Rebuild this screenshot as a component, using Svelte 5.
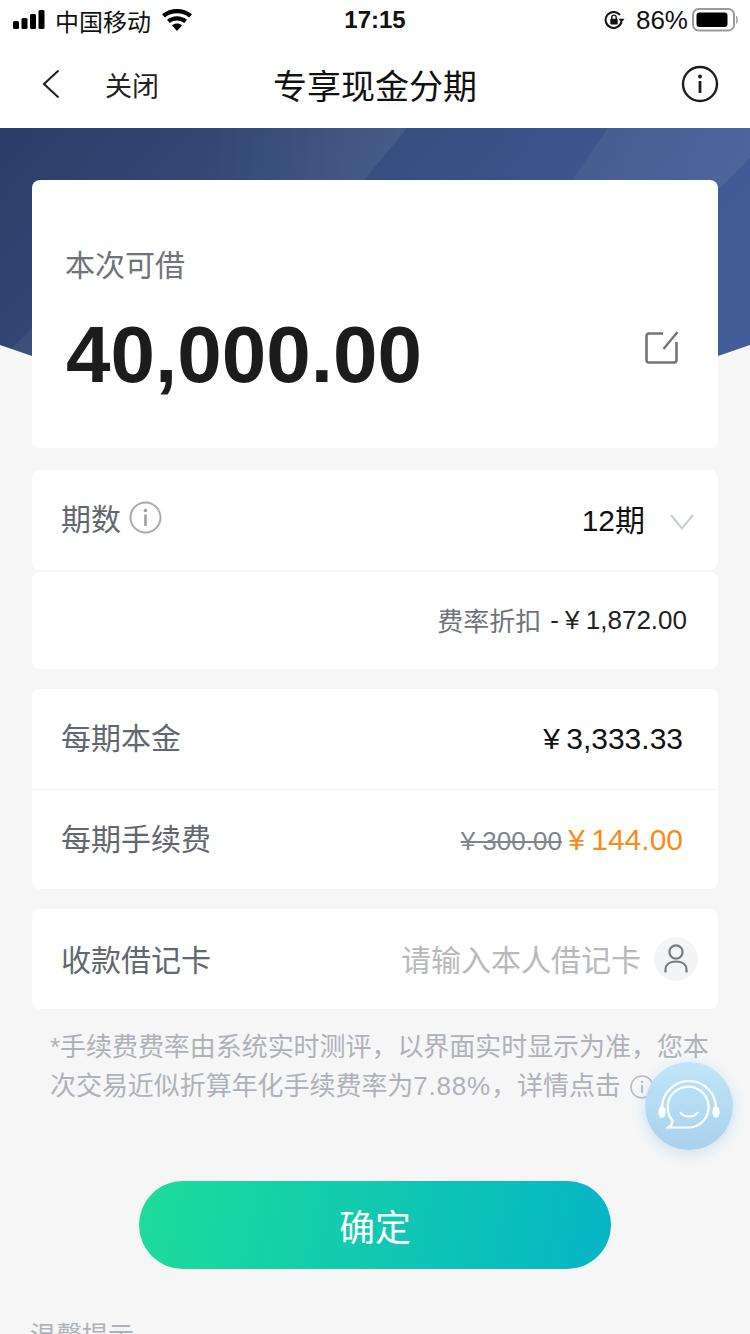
<script lang="ts">
  const noteFirst = '*手续费费率由系统实时测评，以界面实时显示为准，您本';
</script>

<div class="page">
  <!-- hero backdrop, sits behind the first card -->
  <svg class="hero" width="750" height="300" viewBox="0 128 750 300" aria-hidden="true">
    <defs>
      <linearGradient id="heroBase" x1="0" y1="0" x2="1" y2="0.35">
        <stop offset="0" stop-color="#2b3e68" />
        <stop offset="0.55" stop-color="#395084" />
        <stop offset="1" stop-color="#425c98" />
      </linearGradient>
      <linearGradient id="bandA" x1="0" y1="0" x2="1" y2="0">
        <stop offset="0" stop-color="#fff" stop-opacity="0" />
        <stop offset="1" stop-color="#fff" stop-opacity="0.08" />
      </linearGradient>
      <linearGradient id="bandB" x1="0" y1="0" x2="1" y2="0">
        <stop offset="0" stop-color="#fff" stop-opacity="0.05" />
        <stop offset="1" stop-color="#fff" stop-opacity="0.07" />
      </linearGradient>
      <clipPath id="heroClip">
        <path d="M0 128H750V345Q375 480 0 345Z" />
      </clipPath>
    </defs>
    <g clip-path="url(#heroClip)">
      <rect x="0" y="128" width="750" height="300" fill="url(#heroBase)" />
      <path d="M200 128H407L364 180H200Z" fill="url(#bandA)" />
      <path d="M608 128H750V158L718 190H565Z" fill="url(#bandB)" />
      <path d="M0 360L60 300V400H0Z" fill="#fff" fill-opacity="0.05" />
    </g>
  </svg>

  <header class="status">
    <div class="status-left">
      <svg width="33" height="22" viewBox="0 0 33 22" aria-hidden="true">
        <rect x="0" y="12" width="6" height="8" rx="1.5" />
        <rect x="8.5" y="9" width="6" height="11" rx="1.5" />
        <rect x="17" y="5" width="6" height="15" rx="1.5" />
        <rect x="25.5" y="1" width="6" height="19" rx="1.5" />
      </svg>
      <span>中国移动</span>
      <svg class="wifi" width="30" height="22" viewBox="0 0 30 22" aria-hidden="true">
        <path d="M15 22L10 16.4C13 14 17 14 20 16.4Z" />
        <path d="M7.8 13.9L5 10.8C10.8 6.1 19.2 6.1 25 10.8L22.2 13.9C18 10.6 12 10.6 7.8 13.9Z" />
        <path d="M2.9 8.4L0 5.2C8.6-1.7 21.4-1.7 30 5.2L27.1 8.4C20 2.8 10 2.8 2.9 8.4Z" />
      </svg>
    </div>
    <div class="status-time">17:15</div>
    <div class="status-right">
      <svg width="21" height="20" viewBox="0 0 21 20" aria-hidden="true">
        <path d="M17.5 11.5A8 8 0 1 1 16 5" fill="none" stroke="#111" stroke-width="2" />
        <path d="M14.5 8.8H20.5L17.5 12.4Z" fill="#111" />
        <rect x="6.3" y="8.8" width="7.4" height="5.6" rx="1" fill="#111" />
        <path d="M7.8 9V7.3A2.2 2.2 0 0 1 12.2 7.3V9" fill="none" stroke="#111" stroke-width="1.4" />
      </svg>
      <span class="pct">86%</span>
      <svg width="46" height="24" viewBox="0 0 46 24" aria-hidden="true">
        <rect x="1" y="1" width="41" height="21.5" rx="5.5" fill="none" stroke="#9a9a9a" stroke-width="2" />
        <rect x="4.5" y="4.5" width="31" height="14.5" rx="3" fill="#000" />
        <path d="M44 8.5C45.5 9 45.5 14.5 44 15" fill="none" stroke="#9a9a9a" stroke-width="1.5" />
      </svg>
    </div>
  </header>

  <nav class="nav">
    <div class="nav-left">
      <svg width="18" height="30" viewBox="0 0 18 30" aria-hidden="true">
        <path d="M16.5 1.5L2 15L16.5 28.5" fill="none" stroke="#1d1d1d" stroke-width="2" />
      </svg>
      <span class="close">关闭</span>
    </div>
    <h1>专享现金分期</h1>
    <svg class="nav-info" width="38" height="38" viewBox="0 0 38 38" aria-hidden="true">
      <circle cx="19" cy="19" r="17" fill="none" stroke="#1d1d1d" stroke-width="2.4" />
      <circle cx="19" cy="11.5" r="2" fill="#1d1d1d" />
      <rect x="17.6" y="16" width="2.8" height="12" fill="#1d1d1d" />
    </svg>
  </nav>

  <main class="content">
    <section class="card amount-card">
      <div class="amount-label">本次可借</div>
      <div class="amount-row">
        <span class="amount">40,000.00</span>
        <svg class="edit" width="34" height="33" viewBox="0 0 34 33" aria-hidden="true">
          <path d="M18 2.5H4A2.5 2.5 0 0 0 1.5 5V29A2.5 2.5 0 0 0 4 31.5H29A2.5 2.5 0 0 0 31.5 29V11" fill="none" stroke="#70757c" stroke-width="2.6" />
          <path d="M32.5 1L18.5 18" fill="none" stroke="#70757c" stroke-width="2.4" />
        </svg>
      </div>
    </section>

    <section class="group">
      <div class="card row term-row">
        <div class="label">
          期数
          <svg width="33" height="33" viewBox="0 0 33 33" aria-hidden="true">
            <circle cx="16.5" cy="16.5" r="15" fill="none" stroke="#ababab" stroke-width="2" />
            <circle cx="16.5" cy="9.5" r="1.8" fill="#a0a0a0" />
            <rect x="15.2" y="13.5" width="2.6" height="11.5" fill="#a0a0a0" />
          </svg>
        </div>
        <div class="term-value">
          <span>12期</span>
          <svg width="24" height="16" viewBox="0 0 24 16" aria-hidden="true">
            <path d="M1 1L12 14.5L23 1" fill="none" stroke="#c9ced3" stroke-width="2" />
          </svg>
        </div>
      </div>
      <div class="card discount-row">
        <span class="discount-label">费率折扣</span>
        <span class="discount-value">- ¥ 1,872.00</span>
      </div>
    </section>

    <section class="card fee-group">
      <div class="row fee-row">
        <div class="label">每期本金</div>
        <div class="money">¥ 3,333.33</div>
      </div>
      <div class="row fee-row">
        <div class="label">每期手续费</div>
        <div class="money">
          <s>¥ 300.00</s>
          <span class="orange">¥ 144.00</span>
        </div>
      </div>
    </section>

    <section class="card row debit-row">
      <div class="label">收款借记卡</div>
      <div class="debit-value">
        <span class="placeholder">请输入本人借记卡</span>
        <span class="person">
          <svg width="26" height="30" viewBox="0 0 26 30" aria-hidden="true">
            <circle cx="13" cy="8" r="6.6" fill="none" stroke="#777c82" stroke-width="2.2" />
            <path d="M2.5 28.5V26C2.5 20.5 7 17.5 13 17.5S23.5 20.5 23.5 26V28.5" fill="none" stroke="#777c82" stroke-width="2.2" />
          </svg>
        </span>
      </div>
    </section>

    <p class="note">
      {noteFirst}<br />次交易近似折算年化手续费率为<span class="rate">7.88%</span>，详情点击
      <svg class="note-info" width="24" height="24" viewBox="0 0 24 24" aria-hidden="true">
        <circle cx="12" cy="12" r="11" fill="none" stroke="#b7bcc2" stroke-width="1.6" />
        <circle cx="12" cy="7" r="1.3" fill="#b7bcc2" />
        <rect x="11" y="10" width="2" height="8" fill="#b7bcc2" />
      </svg>
    </p>

    <button class="confirm">确定</button>
    <div class="tips">温馨提示</div>
  </main>

  <div class="service">
    <svg width="88" height="88" viewBox="-44 -44 88 88" aria-hidden="true">
      <path d="M-27 5V2A27 27 0 0 1 27 2V5" fill="none" stroke="#fff" stroke-width="2.2" />
      <ellipse cx="-27" cy="6" rx="3.6" ry="6" fill="#fff" />
      <ellipse cx="27" cy="6" rx="3.6" ry="6" fill="#fff" />
      <path d="M-11 21.5H2A20.5 20.5 0 1 0 -16.5 14.5C-16.5 17 -18 20 -20.5 21.5Z" fill="none" stroke="#fff" stroke-width="2.2" />
      <path d="M-9 6C-5 12 5 12 9 6" fill="none" stroke="#fff" stroke-width="2.2" />
    </svg>
  </div>
</div>

<style>
  :global(body) {
    margin: 0;
  }

  .page {
    position: relative;
    width: 750px;
    height: 1334px;
    overflow: hidden;
    background: #f6f6f6;
    color: #111;
    font-family: "Liberation Sans", "Noto Sans CJK SC", sans-serif;
  }

  .hero {
    position: absolute;
    top: 128px;
    left: 0;
  }

  .status {
    display: grid;
    grid-template-columns: 1fr auto 1fr;
    align-items: center;
    height: 40px;
    padding: 0 13px;
    box-sizing: border-box;
    background: #fff;
    font-size: 24px;
  }

  .status-left {
    display: flex;
    align-items: center;
    gap: 9px;
  }

  .wifi {
    margin-left: 2px;
  }

  .status-time {
    font-weight: 700;
    font-size: 24px;
  }

  .status-right {
    display: flex;
    align-items: center;
    justify-content: flex-end;
    margin-right: -1px;
  }

  .pct {
    margin: 0 4px 0 11px;
    font-size: 26px;
  }

  .nav {
    position: relative;
    display: flex;
    align-items: center;
    justify-content: space-between;
    height: 88px;
    padding: 0 31px 0 42px;
    background: #fff;
  }

  .nav-left {
    display: flex;
    align-items: center;
    gap: 45px;
  }

  .close {
    font-size: 27px;
    color: #222;
  }

  .nav h1 {
    position: absolute;
    left: 0;
    right: 0;
    margin: 0;
    text-align: center;
    font-size: 34px;
    font-weight: 400;
    color: #111;
    pointer-events: none;
  }

  .content {
    position: relative;
    display: flex;
    flex-direction: column;
    padding: 52px 32px 0;
  }

  .card {
    background: #fff;
    border-radius: 8px;
  }

  .amount-card {
    height: 268px;
    box-sizing: border-box;
    padding: 64px 39px 0 34px;
  }

  .amount-label {
    margin-left: -1px;
    font-size: 30px;
    line-height: 44px;
    color: #6f7378;
  }

  .amount-row {
    display: flex;
    align-items: center;
    justify-content: space-between;
    margin-top: 21px;
  }

  .amount {
    font-size: 80px;
    font-weight: 700;
    line-height: 92px;
    color: #1c1c1c;
  }

  .edit {
    margin-bottom: 16px;
  }

  .row {
    display: flex;
    align-items: center;
    justify-content: space-between;
    height: 100px;
    box-sizing: border-box;
    padding: 0 35px 0 30px;
  }

  .label {
    display: flex;
    align-items: center;
    gap: 8px;
    margin-left: -1px;
    padding-bottom: 6px;
    font-size: 30px;
    color: #62676d;
  }

  .group {
    margin-top: 22px;
  }

  .term-row {
    padding-right: 24px;
  }

  .term-value {
    display: flex;
    align-items: center;
    gap: 25px;
    font-size: 30px;
    color: #111;
  }

  .term-value span {
    padding-bottom: 4px;
  }

  .term-value svg {
    margin-top: 4px;
  }

  .discount-row {
    display: flex;
    align-items: center;
    justify-content: flex-end;
    gap: 9px;
    height: 97px;
    margin-top: 2px;
    padding-right: 31px;
    font-size: 26px;
  }

  .discount-label {
    padding-bottom: 2px;
    color: #6f7378;
  }

  .discount-value {
    word-spacing: -1px;
    color: #222;
  }

  .fee-group {
    margin-top: 20px;
  }

  .fee-row + .fee-row {
    border-top: 1px solid #f2f2f2;
  }

  .money {
    font-size: 30px;
    word-spacing: -2px;
    color: #111;
  }

  .money s {
    font-size: 26px;
    word-spacing: 0;
    color: #7f858c;
  }

  .orange {
    color: #fa8c16;
  }

  .debit-row {
    margin-top: 20px;
    padding-right: 20px;
  }

  .debit-row .label {
    padding-bottom: 2px;
  }

  .debit-value {
    display: flex;
    align-items: center;
    gap: 13px;
  }

  .placeholder {
    padding-bottom: 2px;
    font-size: 30px;
    color: #b9b9b9;
  }

  .person {
    display: flex;
    align-items: center;
    justify-content: center;
    width: 44px;
    height: 44px;
    border-radius: 50%;
    background: #f3f4f6;
  }

  .note {
    margin: 19px 0 0 18px;
    width: 680px;
    font-size: 26px;
    line-height: 39px;
    letter-spacing: -0.05px;
    color: #aeb2b8;
    white-space: nowrap;
  }

  .rate {
    letter-spacing: 0.8px;
  }

  .note-info {
    vertical-align: -4px;
    margin-left: 2px;
  }

  .confirm {
    align-self: center;
    width: 472px;
    height: 88px;
    margin-top: 75px;
    border: 0;
    border-radius: 44px;
    background: linear-gradient(100deg, #1edc9a 0%, #05b5c6 100%);
    color: #fff;
    font-family: inherit;
    font-size: 36px;
  }

  .tips {
    margin: 46px 0 0 -2px;
    font-size: 26px;
    color: #aeb2b8;
  }

  .service {
    position: absolute;
    left: 645px;
    top: 1062px;
    width: 88px;
    height: 88px;
    border-radius: 50%;
    background: linear-gradient(180deg, #bde6f9 0%, #a8cfee 100%);
    box-shadow: 0 4px 14px rgba(150, 205, 240, 0.45);
    opacity: 0.96;
  }

  .service svg {
    display: block;
  }
</style>
